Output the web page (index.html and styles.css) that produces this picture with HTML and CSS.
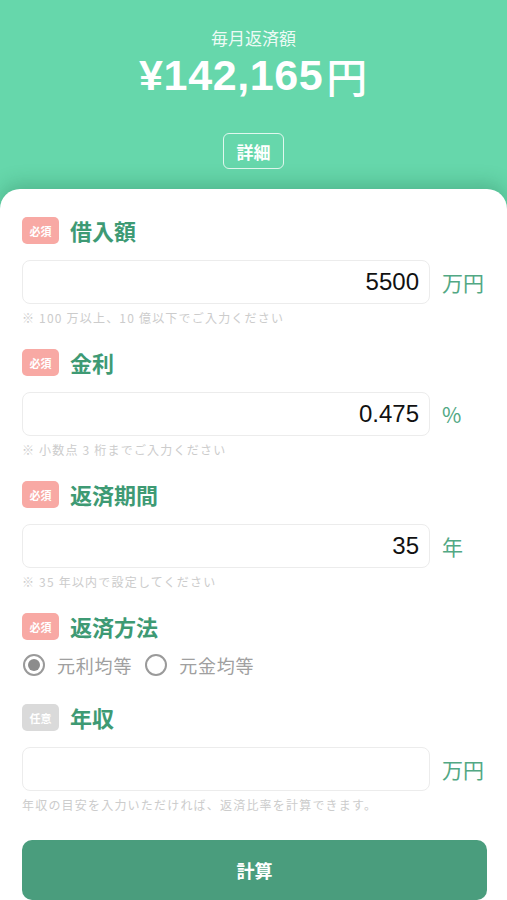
FILE: index.html
```html
<!DOCTYPE html>
<html lang="ja">
<head>
<meta charset="utf-8">
<title>返済シミュレーション</title>
<link rel="stylesheet" href="styles.css">
</head>
<body>
<div class="app">
  <header class="header">
    <div class="header-label">毎月返済額</div>
    <div class="amount">¥142,165<span class="yen">円</span></div>
    <button class="detail-btn">詳細</button>
  </header>
  <main class="card">
    <section class="field">
      <div class="field-head"><span class="badge req">必須</span><span class="label">借入額</span></div>
      <div class="input-row"><div class="input">5500</div><span class="unit">万円</span></div>
      <p class="hint">※ 100 万以上、10 億以下でご入力ください</p>
    </section>
    <section class="field">
      <div class="field-head"><span class="badge req">必須</span><span class="label">金利</span></div>
      <div class="input-row"><div class="input">0.475</div><span class="unit">%</span></div>
      <p class="hint">※ 小数点 3 桁までご入力ください</p>
    </section>
    <section class="field">
      <div class="field-head"><span class="badge req">必須</span><span class="label">返済期間</span></div>
      <div class="input-row"><div class="input">35</div><span class="unit">年</span></div>
      <p class="hint">※ 35 年以内で設定してください</p>
    </section>
    <section class="field field-radio">
      <div class="field-head"><span class="badge req">必須</span><span class="label">返済方法</span></div>
      <div class="radios">
        <span class="radio checked"></span><span class="radio-text">元利均等</span>
        <span class="radio"></span><span class="radio-text">元金均等</span>
      </div>
    </section>
    <section class="field field-last">
      <div class="field-head"><span class="badge opt">任意</span><span class="label">年収</span></div>
      <div class="input-row"><div class="input"></div><span class="unit">万円</span></div>
      <p class="hint">年収の目安を入力いただければ、返済比率を計算できます。</p>
    </section>
    <button class="calc-btn">計算</button>
  </main>
</div>
</body>
</html>
```
FILE: styles.css
```css
* { box-sizing: border-box; }
html, body { margin: 0; padding: 0; }
body {
  font-family: "Noto Sans CJK JP", "Noto Sans", sans-serif;
  background: #ffffff;
  width: 507px;
  height: 900px;
  overflow: hidden;
}
.app {
  background: #66d7ab;
  min-height: 900px;
  display: flex;
  flex-direction: column;
}
.header {
  height: 189px;
  padding-top: 28px;
  display: flex;
  flex-direction: column;
  align-items: center;
  color: #ffffff;
}
.header-label {
  font-size: 17px;
  line-height: 20px;
  color: rgba(255,255,255,0.9);
}
.amount {
  margin-top: 5px;
  height: 44px;
  display: flex;
  align-items: center;
  font-family: "Liberation Sans", Arial, sans-serif;
  font-size: 43px;
  font-weight: 700;
  letter-spacing: 0.6px;
}
.amount .yen {
  font-family: "Noto Sans CJK JP", sans-serif;
  font-weight: 500;
  font-size: 41px;
  margin-left: 3px;
}
.detail-btn {
  margin-top: 36px;
  width: 61px;
  height: 36px;
  border: 1.5px solid rgba(255,255,255,0.8);
  border-radius: 6px;
  background: transparent;
  color: #ffffff;
  font-family: inherit;
  font-size: 17px;
  font-weight: 700;
  padding: 0;
  line-height: 1;
}
.card {
  flex: 1;
  background: #ffffff;
  border-radius: 20px 20px 0 0;
  padding: 28px 20px 0 22px;
  box-shadow: 0 -6px 18px rgba(20, 90, 60, 0.25);
}
.field { margin-bottom: 23px; }
.field-radio { margin-bottom: 28px; }
.field-last { margin-bottom: 27px; }
.field-head {
  display: flex;
  align-items: center;
  height: 27px;
  gap: 11px;
}
.badge {
  width: 37px;
  height: 27px;
  border-radius: 5px;
  color: #ffffff;
  font-size: 11px;
  font-weight: 700;
  display: flex;
  align-items: center;
  justify-content: center;
}
.badge.req { background: #f8a9a4; }
.badge.opt { background: #dadada; }
.label {
  font-size: 22px;
  font-weight: 700;
  color: #3e9a74;
  line-height: 27px;
}
.input-row {
  margin-top: 16px;
  display: grid;
  grid-template-columns: 408px 1fr;
  column-gap: 12px;
  align-items: center;
}
.input {
  height: 44px;
  border: 1px solid #ececec;
  border-radius: 8px;
  background: #ffffff;
  text-align: right;
  padding-right: 10px;
  font-family: "Liberation Sans", Arial, sans-serif;
  font-size: 24px;
  line-height: 42px;
  color: #111111;
}
.unit {
  font-size: 21px;
  color: #52a884;
  line-height: 1;
}
.hint {
  margin: 6px 0 0;
  font-size: 12px;
  line-height: 16px;
  letter-spacing: 1.2px;
  color: #cccccc;
}
.radios {
  margin-top: 14px;
  height: 22px;
  display: flex;
  align-items: center;
}
.radio {
  width: 22px;
  height: 22px;
  border-radius: 50%;
  border: 2px solid #9a9a9a;
  display: flex;
  align-items: center;
  justify-content: center;
  margin-left: 1px;
}
.radio.checked::after {
  content: "";
  width: 12px;
  height: 12px;
  border-radius: 50%;
  background: #8c8c8c;
}
.radio-text {
  margin-left: 12px;
  margin-right: 12px;
  font-size: 18px;
  color: #a0a0a0;
  letter-spacing: 0.8px;
}
.calc-btn {
  display: block;
  width: 465px;
  height: 60px;
  border: none;
  border-radius: 10px;
  background: #4a9d7d;
  color: #ffffff;
  font-family: inherit;
  font-size: 18px;
  font-weight: 700;
}
```
